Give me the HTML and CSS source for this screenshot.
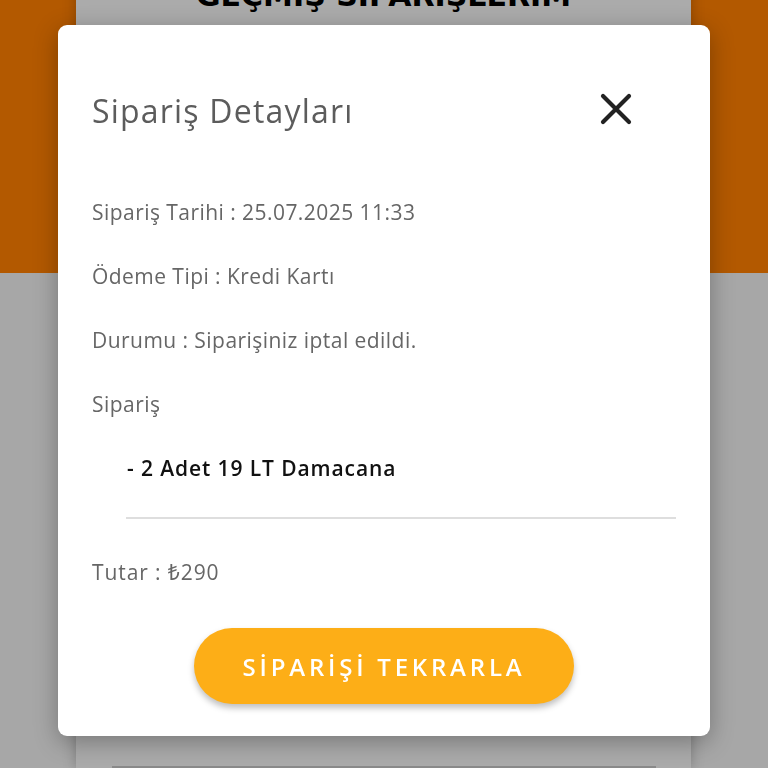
FILE: index.html
```html
<!DOCTYPE html>
<html lang="tr">
<head>
<meta charset="utf-8">
<link rel="stylesheet" href="styles.css">
</head>
<body>
<div class="page">
  <div class="band"></div>
  <div class="back-card">
    <h1 class="back-title">GEÇMİŞ SİPARİŞLERİM</h1>
    <div class="back-spacer"></div>
    <div class="back-line"></div>
  </div>
</div>
<div class="modal">
  <div class="modal-head">
    <h2 class="modal-title">Sipariş Detayları</h2>
    <svg class="close" width="32" height="32" viewBox="0 0 32 32"><path d="M3 3 L29 29 M29 3 L3 29" stroke="#222" stroke-width="4.2" stroke-linecap="round" fill="none"/></svg>
  </div>
  <div class="row">Sipariş Tarihi : 25.07.2025 11:33</div>
  <div class="row">Ödeme Tipi : Kredi Kartı</div>
  <div class="row">Durumu : Siparişiniz iptal edildi.</div>
  <div class="row">Sipariş</div>
  <div class="row item">- 2 Adet 19 LT Damacana</div>
  <div class="divider"></div>
  <div class="row total">Tutar : ₺290</div>
  <div class="btn-wrap"><button class="btn">SİPARİŞİ TEKRARLA</button></div>
</div>
</body>
</html>
```
FILE: styles.css
```css
html, body {
  margin: 0;
  padding: 0;
  width: 768px;
  height: 768px;
  overflow: hidden;
  background: #a7a7a7;
  font-family: "Open Sans", "Noto Sans", sans-serif;
}
.page {
  position: relative;
  width: 768px;
  height: 768px;
  overflow: hidden;
}
.band {
  height: 273px;
  background: #b35900;
}
.back-card {
  position: absolute;
  top: -40px;
  left: 76px;
  width: 615px;
  height: 808px;
  background: #ababab;
  box-shadow: 0 0 12px rgba(0,0,0,0.25);
  display: flex;
  flex-direction: column;
  align-items: center;
}
.back-title {
  margin: 16px 0 0 0;
  font-family: "DejaVu Sans", sans-serif;
  font-weight: 700;
  font-size: 30px;
  line-height: 40px;
  color: #000;
}
.back-spacer { height: 750px; }
.back-line {
  width: 544px;
  height: 2px;
  background: #8a8a8a;
}
.modal {
  position: fixed;
  left: 58px;
  top: 25px;
  width: 652px;
  height: 711px;
  box-sizing: border-box;
  padding: 53px 34px 0 34px;
  background: #fff;
  border-radius: 9px;
  box-shadow: 0 6px 24px rgba(0,0,0,0.3);
}
.modal-head {
  height: 64px;
  display: flex;
  align-items: center;
  justify-content: space-between;
  margin-bottom: 38px;
  padding-right: 44px;
}
.modal-title {
  margin: 0;
  font-weight: 400;
  font-size: 32px;
  color: #5c5c5c;
  letter-spacing: 1.2px;
}
.close { display: block; margin-top: -2px; }
.row {
  height: 64px;
  display: flex;
  align-items: center;
  font-size: 21px;
  letter-spacing: 0.45px;
  color: #666;
}
.item {
  padding-left: 35px;
  color: #111;
  font-weight: 600;
  letter-spacing: 0.9px;
}
.divider {
  margin: 17px 0 0 34px;
  height: 2px;
  background: #dedede;
}
.total { margin-top: 21px; letter-spacing: 0.9px; }
.btn-wrap {
  margin-top: 24px;
  display: flex;
  justify-content: center;
}
.btn {
  width: 380px;
  height: 76px;
  border: none;
  border-radius: 38px;
  background: #fdae17;
  color: #fff;
  font-family: "Open Sans", sans-serif;
  font-weight: 600;
  font-size: 24px;
  letter-spacing: 3.8px;
  padding: 0;
  box-shadow: 0 4px 6px rgba(0,0,0,0.25);
}
```
